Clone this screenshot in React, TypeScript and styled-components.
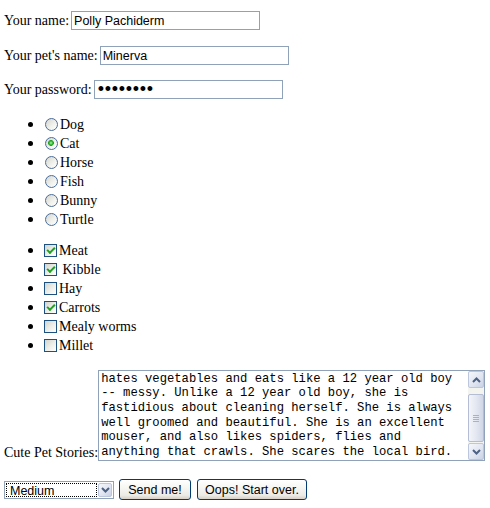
import { useEffect, useRef } from 'react';
import styled, { createGlobalStyle } from 'styled-components';

const GlobalStyle = createGlobalStyle`
	html, body {
		margin: 0;
		padding: 0;
		background: #ffffff;
	}
	body {
		font-family: 'Liberation Serif', 'Times New Roman', serif;
		font-size: 14px;
		color: #000000;
	}
`;

const story = [
	'Minerva is a very sweet and spoiled cat. She',
	'hates vegetables and eats like a 12 year old boy',
	'-- messy. Unlike a 12 year old boy, she is',
	'fastidious about cleaning herself. She is always',
	'well groomed and beautiful. She is an excellent',
	'mouser, and also likes spiders, flies and',
	'anything that crawls. She scares the local bird.',
].join('\n');

const pets = ['Dog', 'Cat', 'Horse', 'Fish', 'Bunny', 'Turtle'];
const foods = [
	{ label: 'Meat', checked: true },
	{ label: '\u00a0Kibble', checked: true },
	{ label: 'Hay', checked: false },
	{ label: 'Carrots', checked: true },
	{ label: 'Mealy worms', checked: false },
	{ label: 'Millet', checked: false },
];

const Chevron = ({ up }: { up?: boolean }) => (
	<svg width="9" height="6" viewBox="0 0 9 6">
		<path
			d={up ? 'M1 5 L4.5 1.5 L8 5' : 'M1 1 L4.5 4.5 L8 1'}
			fill="none"
			stroke="#4d6185"
			strokeWidth="2"
		/>
	</svg>
);

const App = () => {
	const storyRef = useRef<HTMLTextAreaElement>(null);

	// the story box is shown scrolled to its last line
	useEffect(() => {
		const el = storyRef.current;
		if (el) el.scrollTop = el.scrollHeight;
	}, []);

	return (
		<>
			<GlobalStyle />
			<Form onSubmit={(e) => e.preventDefault()}>
				<FieldRow $after={16}>
					<FieldLabel htmlFor="name">Your name:</FieldLabel>
					<TextInput id="name" type="text" defaultValue="Polly Pachiderm" />
				</FieldRow>
				<FieldRow $after={15}>
					<FieldLabel htmlFor="pet">Your pet's name:</FieldLabel>
					<TextInput id="pet" type="text" defaultValue="Minerva" />
				</FieldRow>
				<FieldRow $after={16}>
					<FieldLabel htmlFor="pw">Your password:</FieldLabel>
					<PasswordInput id="pw" type="password" defaultValue="minerva1" />
				</FieldRow>

				<OptionList $after={12}>
					{pets.map((pet) => (
						<OptionItem key={pet}>
							<Choice>
								<Radio name="pet" value={pet} defaultChecked={pet === 'Cat'} />
								<ChoiceText>{pet}</ChoiceText>
							</Choice>
						</OptionItem>
					))}
				</OptionList>

				<OptionList $after={15}>
					{foods.map((food) => (
						<OptionItem key={food.label}>
							<Choice>
								<Checkbox defaultChecked={food.checked} />
								<ChoiceText>{food.label}</ChoiceText>
							</Choice>
						</OptionItem>
					))}
				</OptionList>

				<StoryRow>
					<StoryLabel htmlFor="story">Cute Pet Stories:</StoryLabel>
					<StoryBox>
						<StoryText id="story" ref={storyRef} defaultValue={story} />
						<ScrollBar>
							<ScrollButton>
								<Chevron up />
							</ScrollButton>
							<ScrollTrack>
								<ScrollThumb>
									<Grip />
									<Grip />
									<Grip />
									<Grip />
								</ScrollThumb>
							</ScrollTrack>
							<ScrollButton>
								<Chevron />
							</ScrollButton>
						</ScrollBar>
					</StoryBox>
				</StoryRow>

				<ActionRow>
					<SelectBox>
						<SizeSelect defaultValue="Medium">
							<option>Small</option>
							<option>Medium</option>
							<option>Large</option>
						</SizeSelect>
						<DropButton>
							<Chevron />
						</DropButton>
					</SelectBox>
					<PushButton type="submit" $width={72}>
						Send me!
					</PushButton>
					<PushButton type="reset" $width={110}>
						Oops! Start over.
					</PushButton>
				</ActionRow>
			</Form>
		</>
	);
};

const Form = styled.form`
	display: flex;
	flex-direction: column;
	align-items: flex-start;
	padding: 11px 4px 0 4px;
`;

const FieldRow = styled.div<{ $after: number }>`
	display: flex;
	align-items: center;
	gap: 2px;
	height: 19px;
	margin-bottom: ${(p) => p.$after}px;
`;

const FieldLabel = styled.label`
	white-space: nowrap;
`;

const TextInput = styled.input`
	box-sizing: border-box;
	width: 189px;
	height: 19px;
	margin: 0;
	padding: 0 2px;
	border: 1px solid #8fa2ba;
	background: #ffffff;
	font-family: 'Liberation Sans', Arial, sans-serif;
	font-size: 12.5px;
	color: #000000;
	outline: none;
`;

const PasswordInput = styled(TextInput)`
	font-size: 18px;
	letter-spacing: 0.7px;
	padding: 0 3px;
`;

const OptionList = styled.ul<{ $after: number }>`
	list-style: none;
	margin: 0 0 ${(p) => p.$after}px 0;
	padding: 0;
`;

const OptionItem = styled.li`
	display: flex;
	align-items: center;
	height: 19px;

	&::before {
		content: '';
		flex: none;
		width: 5px;
		height: 5px;
		border-radius: 50%;
		background: #000000;
		margin: 0 11px 0 24px;
	}
`;

const Choice = styled.label`
	display: flex;
	align-items: center;
	white-space: nowrap;
`;

const ChoiceText = styled.span`
	margin-left: 2px;
`;

const Radio = styled.input.attrs({ type: 'radio' })`
	appearance: none;
	box-sizing: border-box;
	flex: none;
	width: 13px;
	height: 13px;
	margin: 0 0 0 1px;
	border: 1px solid #4a6d99;
	border-radius: 50%;
	background: linear-gradient(135deg, #d6d6d0 0%, #f2f2ee 60%, #ffffff 100%);

	&:checked {
		background:
			radial-gradient(circle at 45% 45%, #b8f0b8 0, #3fbf3f 1.5px, #21a121 2.6px, transparent 3.2px),
			linear-gradient(135deg, #d6d6d0 0%, #f2f2ee 60%, #ffffff 100%);
	}
`;

const Checkbox = styled.input.attrs({ type: 'checkbox' })`
	appearance: none;
	box-sizing: border-box;
	flex: none;
	display: grid;
	place-items: center;
	width: 13px;
	height: 13px;
	margin: 0;
	border: 1px solid #1c5180;
	background: linear-gradient(135deg, #d4d4ce 0%, #eeeeea 55%, #ffffff 100%);

	&:checked::after {
		content: '';
		width: 6px;
		height: 3px;
		border-left: 2px solid #21a121;
		border-bottom: 2px solid #21a121;
		transform: translate(0, -1px) rotate(-45deg);
	}
`;

const StoryRow = styled.div`
	display: flex;
	align-items: flex-end;
`;

const StoryLabel = styled.label`
	line-height: 16px;
	white-space: nowrap;
`;

const StoryBox = styled.div`
	display: flex;
	box-sizing: border-box;
	width: 387px;
	height: 91px;
	border: 1px solid #8fa2ba;
	background: #ffffff;
`;

const StoryText = styled.textarea`
	flex: 1;
	min-width: 0;
	margin: 0;
	padding: 0 2px;
	border: 0;
	resize: none;
	overflow: hidden;
	outline: none;
	font-family: 'Liberation Mono', 'Courier New', monospace;
	font-size: 12.2px;
	line-height: 14.67px;
	color: #000000;
	background: #ffffff;
`;

const ScrollBar = styled.div`
	flex: none;
	display: flex;
	flex-direction: column;
	width: 16px;
	background: #f3f3ef;
`;

const ScrollButton = styled.div`
	box-sizing: border-box;
	flex: none;
	display: flex;
	align-items: center;
	justify-content: center;
	height: 17px;
	border: 1px solid #bcc6dc;
	border-radius: 2px;
	background: linear-gradient(135deg, #f6f7fb 0%, #dfe4f0 60%, #c9d1e4 100%);
`;

const ScrollTrack = styled.div`
	flex: 1;
	display: flex;
	flex-direction: column;
	justify-content: flex-end;
	padding: 1px 0;
`;

const ScrollThumb = styled.div`
	box-sizing: border-box;
	display: flex;
	flex-direction: column;
	align-items: center;
	justify-content: center;
	gap: 1px;
	height: 48px;
	border: 1px solid #b4bdd4;
	border-radius: 2px;
	background: linear-gradient(90deg, #f4f5fa 0%, #e2e6f0 55%, #d0d6e6 100%);
`;

const Grip = styled.span`
	width: 6px;
	height: 1px;
	background: #a8b1c8;
`;

const ActionRow = styled.div`
	display: flex;
	align-items: center;
	gap: 6px;
	margin-top: 18px;
`;

const SelectBox = styled.div`
	box-sizing: border-box;
	display: flex;
	width: 110px;
	height: 18px;
	padding: 1px;
	border: 1px solid #8fa2ba;
	background: #ffffff;
	margin-right: -1px;
`;

const SizeSelect = styled.select`
	appearance: none;
	flex: 1;
	min-width: 0;
	margin: 0;
	padding: 0 3px;
	border: 1px dotted #000000;
	border-radius: 0;
	background: #ffffff;
	font-family: 'Liberation Sans', Arial, sans-serif;
	font-size: 12.5px;
	line-height: 14px;
	color: #000000;
	outline: none;
`;

const DropButton = styled.span`
	box-sizing: border-box;
	flex: none;
	display: flex;
	align-items: center;
	justify-content: center;
	width: 14px;
	margin-left: 1px;
	border: 1px solid #bcc6dc;
	border-radius: 2px;
	background: linear-gradient(135deg, #f6f7fb 0%, #dfe4f0 60%, #c9d1e4 100%);
`;

const PushButton = styled.button<{ $width: number }>`
	box-sizing: border-box;
	width: ${(p) => p.$width}px;
	height: 21px;
	margin: 0;
	padding: 0;
	border: 1px solid #003c74;
	border-radius: 3px;
	background: linear-gradient(to bottom, #ffffff 0%, #f7f7f4 35%, #ecebe6 80%, #d6d0c5 100%);
	font-family: 'Liberation Sans', Arial, sans-serif;
	font-size: 12.5px;
	color: #000000;
	cursor: pointer;
`;

export default App;
